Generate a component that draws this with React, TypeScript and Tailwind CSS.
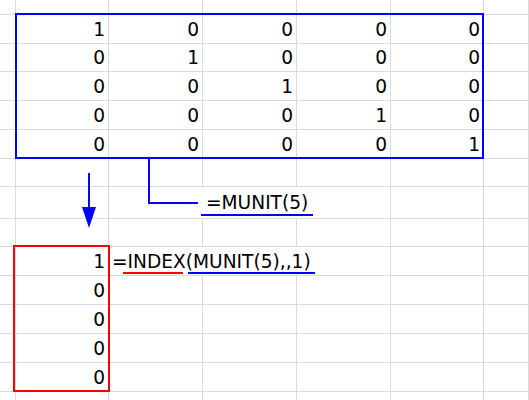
import clsx from "clsx";

const rowHeights = [15, 29, 28, 29, 29, 29, 28, 32, 28, 29, 29, 29, 29, 29, 9];

type Cell = { text?: string; align?: "left" | "right"; hideRight?: boolean };

const buildSheet = (): Cell[][] => {
  const rows: Cell[][] = rowHeights.map(() => Array.from({ length: 7 }, () => ({})));

  // MUNIT(5) result, rows 1-5, cols 1-5
  for (let r = 0; r < 5; r++) {
    for (let c = 0; c < 5; c++) {
      rows[r + 1][c + 1] = { text: r === c ? "1" : "0", align: "right" };
    }
  }

  // formula label for the matrix
  rows[7][2] = { hideRight: true };
  rows[7][3] = { text: "=MUNIT(5)", align: "left", hideRight: true };

  // INDEX result column
  for (let r = 0; r < 5; r++) {
    rows[r + 9][1] = { text: r === 0 ? "1" : "0", align: "right" };
  }
  rows[9][2] = { text: "=INDEX(MUNIT(5),,1)", align: "left", hideRight: true };
  rows[9][3] = { hideRight: true };

  return rows;
};

const App = () => {
  const sheet = buildSheet();

  return (
    <div className="relative w-[529px] h-[400px] overflow-hidden bg-white text-black font-['DejaVu_Sans',sans-serif]">
      {/* Sheet grid */}
      <div className="grid grid-cols-[16px_93px_94px_94px_94px_93px_45px] grid-rows-[15px_29px_28px_29px_29px_29px_28px_32px_28px_29px_29px_29px_29px_29px_9px]">
        {sheet.map((row, r) =>
          row.map((cell, c) => (
            <div
              key={`${r}-${c}`}
              className={clsx(
                "flex items-end border-b border-r border-[#dadada] pb-[4px] text-[18.6px] leading-[18px] whitespace-nowrap",
                cell.hideRight && "border-r-transparent",
                cell.align === "right" ? "justify-end pr-[3px]" : "justify-start pl-[3px]",
                r === 7 && "pb-[6px]"
              )}
            >
              {cell.text && <span>{cell.text}</span>}
            </div>
          ))
        )}
      </div>

      {/* Annotations drawn over the sheet */}
      <div className="absolute left-[15px] top-[13px] w-[469px] h-[146px] border-2 border-[#0000ff]" />
      <div className="absolute left-[148px] top-[157px] w-[2px] h-[47px] bg-[#0000ff]" />
      <div className="absolute left-[148px] top-[202px] w-[50px] h-[2px] bg-[#0000ff]" />
      <div className="absolute left-[201px] top-[214px] w-[112px] h-[2px] bg-[#0000ff]" />

      {/* Arrow */}
      <div className="absolute left-[88px] top-[173px] w-[2px] h-[35px] bg-[#0000ff]" />
      <svg className="absolute left-[82px] top-[207px]" width="14" height="21" viewBox="0 0 14 21">
        <polygon points="0,0 14,0 7,21" fill="#0000ff" />
      </svg>

      <div className="absolute left-[13px] top-[245px] w-[97px] h-[147px] border-2 border-[#ff0000]" />
      <div className="absolute left-[123px] top-[272px] w-[60px] h-[2px] bg-[#ff0000]" />
      <div className="absolute left-[188px] top-[272px] w-[127px] h-[2px] bg-[#0000ff]" />
    </div>
  );
};

export default App;
